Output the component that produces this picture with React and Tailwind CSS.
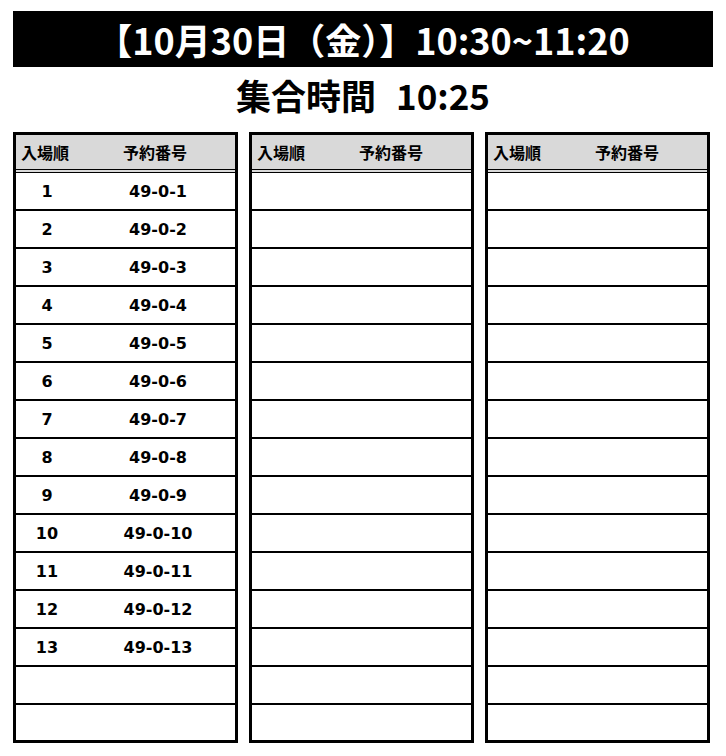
const ROWS = 15;
const entries = Array.from({ length: 13 }, (_, i) => ({ order: i + 1, code: `49-0-${i + 1}` }));

const jp = { fontFamily: '"Noto Sans CJK JP", "Noto Sans", sans-serif' };
const num = { fontFamily: '"DejaVu Sans", Verdana, sans-serif' };

function EntryTable({ rows = [] }) {
  return (
    <div className="w-[225px] border-[3px] border-black bg-white">
      <div
        className="flex h-[38px] items-center border-b-[4px] border-double border-black bg-[#d9d9d9] text-[16px] font-bold text-black"
        style={jp}
      >
        <div className="w-[65px] pl-[5px]">入場順</div>
        <div className="flex-1 pr-[6px] text-center">予約番号</div>
      </div>
      {Array.from({ length: ROWS }, (_, i) => {
        const row = rows[i];
        return (
          <div
            className={
              i === ROWS - 1
                ? "flex h-[35px] items-center pt-[1px] text-[16px] font-bold text-black"
                : "flex h-[38px] items-center border-b-2 border-black pt-[1px] text-[16px] font-bold text-black"
            }
            key={i}
            style={num}
          >
            <div className="w-[62px] text-center">{row ? row.order : ""}</div>
            <div className="flex-1 pl-[3px] text-center">{row ? row.code : ""}</div>
          </div>
        );
      })}
    </div>
  );
}

export default function App() {
  return (
    <div className="h-[756px] w-[726px] overflow-hidden bg-white px-[13px] pt-[11px]">
      <div
        className="flex h-[56px] items-center justify-center bg-black text-[36px] font-bold text-white"
        style={jp}
      >
        【10月30日（金）】10:30~11:20
      </div>
      <div
        className="flex h-[65px] items-center justify-center pb-[8px] text-[35px] font-bold text-black"
        style={jp}
      >
        <span>集合時間</span>
        <span className="ml-[20px]">10:25</span>
      </div>
      <div className="flex gap-[11px]">
        <EntryTable rows={entries} />
        <EntryTable />
        <EntryTable />
      </div>
    </div>
  );
}
